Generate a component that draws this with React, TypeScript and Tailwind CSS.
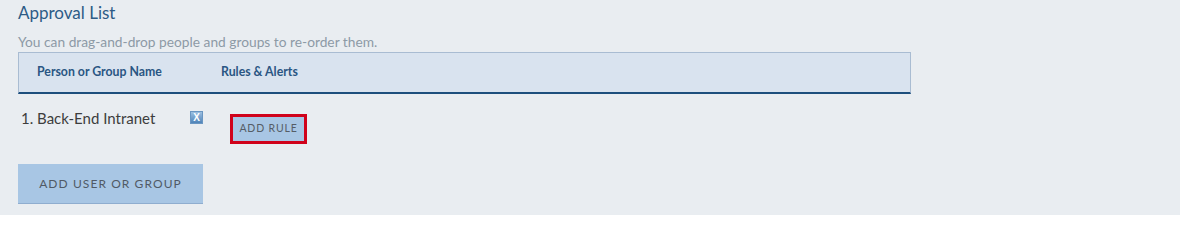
export default function App() {
    return (
        <div className="w-[1180px] h-[215px] bg-[#e9edf1] px-[18px] pt-[3px] font-['Lato','Liberation_Sans',sans-serif]">
            <h2 className="text-[17px] leading-[20px] text-[#2d5b86]">Approval List</h2>
            <p className="mt-[10px] text-[13.75px] leading-[17px] text-[#8d9aa6]">You can drag-and-drop people and groups to re-order them.</p>
            <div className="mt-[2px] w-[893px] h-[42px] bg-[#d9e3ef] border border-[#a9bcd2] border-b-2 border-b-[#1d4f7d] flex items-center text-[12.3px] font-bold text-[#2a5683]">
                <span className="w-[202px] pl-[18px]">Person or Group Name</span>
                <span>Rules &amp; Alerts</span>
            </div>
            <div className="flex mt-[14px]">
                <span className="w-[172px] pl-[3px] text-[15px] leading-[20px] text-[#3d3d3d]">1. Back-End Intranet</span>
                <span className="mt-[3px] w-[13px] h-[13px] flex items-center justify-center bg-gradient-to-b from-[#9cbfe0] to-[#4f84b9] border border-[#6a96c2] text-white text-[10px] font-bold leading-none font-['Liberation_Sans',sans-serif]">X</span>
                <button className="ml-[27px] mt-[6px] h-[30px] w-[77px] border-[3px] border-[#d0021b] bg-[#a8c6e4] text-[10.5px] tracking-[0.08em] text-[#555d66]">ADD RULE</button>
            </div>
            <button className="mt-[20px] w-[185px] h-[40px] bg-[#a8c6e4] border-b border-b-[#8fadcf] text-[12px] tracking-[0.09em] text-[#505a66]">ADD USER OR GROUP</button>
        </div>
    );
}
